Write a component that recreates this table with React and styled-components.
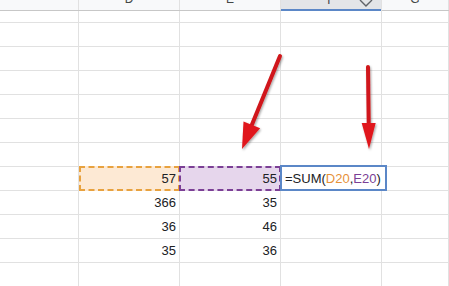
import React from 'react'
import styled, { createGlobalStyle } from 'styled-components'

const GlobalStyle = createGlobalStyle`
  html, body {
    margin: 0;
    padding: 0;
    background: #ffffff;
    overflow: hidden;
  }
  body {
    font-family: 'Liberation Sans', Arial, sans-serif;
  }
`

// column C starts off-screen, so its label is not visible
const COLS = [
  { key: 'C', width: 79, label: '' },
  { key: 'D', width: 101, label: 'D' },
  { key: 'E', width: 101, label: 'E' },
  { key: 'F', width: 101, label: 'F' },
  { key: 'G', width: 67, label: 'G' },
]

const ROWS = [
  { n: 9, h: 11 },
  { n: 10 },
  { n: 11 },
  { n: 12 },
  { n: 13 },
  { n: 14 },
  { n: 15 },
  { n: 20, values: { D: '57', E: '55' }, highlight: true },
  { n: 21, values: { D: '366', E: '35' } },
  { n: 22, values: { D: '36', E: '46' } },
  { n: 23, values: { D: '35', E: '36' } },
  { n: 24 },
]

const Sheet = styled.div`
  position: relative;
  width: 449px;
  height: 286px;
  overflow: hidden;
  background: #fff;
`

const Row = styled.div`
  display: flex;
  height: ${p => p.h}px;
  border-bottom: 1px solid ${p => (p.header ? '#c7c7c7' : '#e1e1e1')};
  box-sizing: content-box;
`

const HeaderCell = styled.div`
  flex: 0 0 ${p => p.w}px;
  box-sizing: border-box;
  border-right: 1px solid #e1e1e1;
  background: ${p => (p.active ? '#e3e5e8' : '#f8f9fa')};
  box-shadow: ${p => (p.active ? 'inset 0 -2px 0 #5b87c7' : 'none')};
  margin-bottom: ${p => (p.active ? '-1px' : '0')};
  height: ${p => (p.active ? 11 : 10)}px;
  position: relative;
  overflow: hidden;
  display: flex;
  align-items: flex-end;
  justify-content: center;
  color: #444746;
  font-size: 12px;
`

const HeaderLabel = styled.span`
  line-height: 12px;
  margin-bottom: 5px;
`

const Chevron = styled.svg`
  position: absolute;
  right: 8px;
  bottom: 2px;
`

const Cell = styled.div`
  flex: 0 0 ${p => p.w}px;
  box-sizing: border-box;
  border-right: 1px solid #e1e1e1;
  display: flex;
  align-items: center;
  justify-content: flex-end;
  padding-right: 3px;
  font-size: 13px;
  color: #202124;
  position: relative;
`

const RefMark = styled.div`
  position: absolute;
  left: ${p => (p.first ? 0 : -1)}px;
  top: -1px;
  right: -1px;
  bottom: -1px;
  background: ${p => p.fill};
  border: 2px dashed ${p => p.line};
  box-sizing: border-box;
`

const CellText = styled.span`
  position: relative;
`

const Editor = styled.div`
  position: absolute;
  left: 280px;
  top: 165px;
  height: 26px;
  box-sizing: border-box;
  border: 2px solid #5b87c7;
  background: #fff;
  display: flex;
  align-items: center;
  padding: 0 4px 0 3px;
  font-size: 13px;
  color: #202124;
  white-space: nowrap;
`

const Ref = styled.span`
  color: ${p => p.c};
`

const Overlay = styled.svg`
  position: absolute;
  left: 0;
  top: 0;
  pointer-events: none;
`

function Arrow({ x1, y1, x2, y2, head = 24, half = 8 }) {
  const dx = x2 - x1
  const dy = y2 - y1
  const len = Math.hypot(dx, dy)
  const ux = dx / len
  const uy = dy / len
  const nx = -uy
  const ny = ux
  const bx = x2 - ux * head
  const by = y2 - uy * head
  const pts = [
    [x2, y2],
    [bx + nx * half, by + ny * half],
    [bx - nx * half, by - ny * half],
  ]
    .map(p => p.join(','))
    .join(' ')
  return (
    <g filter="url(#shadow)">
      <line
        x1={x1}
        y1={y1}
        x2={bx + ux * 2}
        y2={by + uy * 2}
        stroke="#d0161a"
        strokeWidth="4"
        strokeLinecap="round"
      />
      <polygon points={pts} fill="#e0181c" />
    </g>
  )
}

export default function App() {
  return (
    <Sheet>
      <GlobalStyle />
      <Row h={10} header>
        {COLS.map(c => (
          <HeaderCell key={c.key} w={c.width} active={c.key === 'F'}>
            {c.label && <HeaderLabel>{c.label}</HeaderLabel>}
            {c.key === 'F' && (
              <Chevron width="14" height="10" viewBox="0 0 14 10">
                <path
                  d="M1 1 L7 7 L13 1"
                  fill="none"
                  stroke="#5f6368"
                  strokeWidth="1.4"
                />
              </Chevron>
            )}
          </HeaderCell>
        ))}
      </Row>
      {ROWS.map(r => (
        <Row key={r.n} h={r.h || 23}>
          {COLS.map(c => {
            const v = r.values ? r.values[c.key] : null
            return (
              <Cell key={c.key} w={c.width}>
                {r.highlight && c.key === 'D' && (
                  <RefMark first fill="#fde9d4" line="#e8a23f" />
                )}
                {r.highlight && c.key === 'E' && (
                  <RefMark fill="#e6d6ec" line="#7b3f95" />
                )}
                {v && <CellText>{v}</CellText>}
              </Cell>
            )
          })}
        </Row>
      ))}
      <Editor>
        =SUM(<Ref c="#e69138">D20</Ref>,<Ref c="#7b3f95">E20</Ref>)
      </Editor>
      <Overlay width="449" height="286" viewBox="0 0 449 286">
        <defs>
          <filter id="shadow" x="-50%" y="-20%" width="200%" height="140%">
            <feDropShadow dx="1" dy="1.5" stdDeviation="1.2" floodColor="#000" floodOpacity="0.35" />
          </filter>
        </defs>
        <Arrow x1={280} y1={56} x2={242} y2={149} head={26} half={9} />
        <Arrow x1={368} y1={67} x2={369} y2={149} head={26} half={7} />
      </Overlay>
    </Sheet>
  )
}
